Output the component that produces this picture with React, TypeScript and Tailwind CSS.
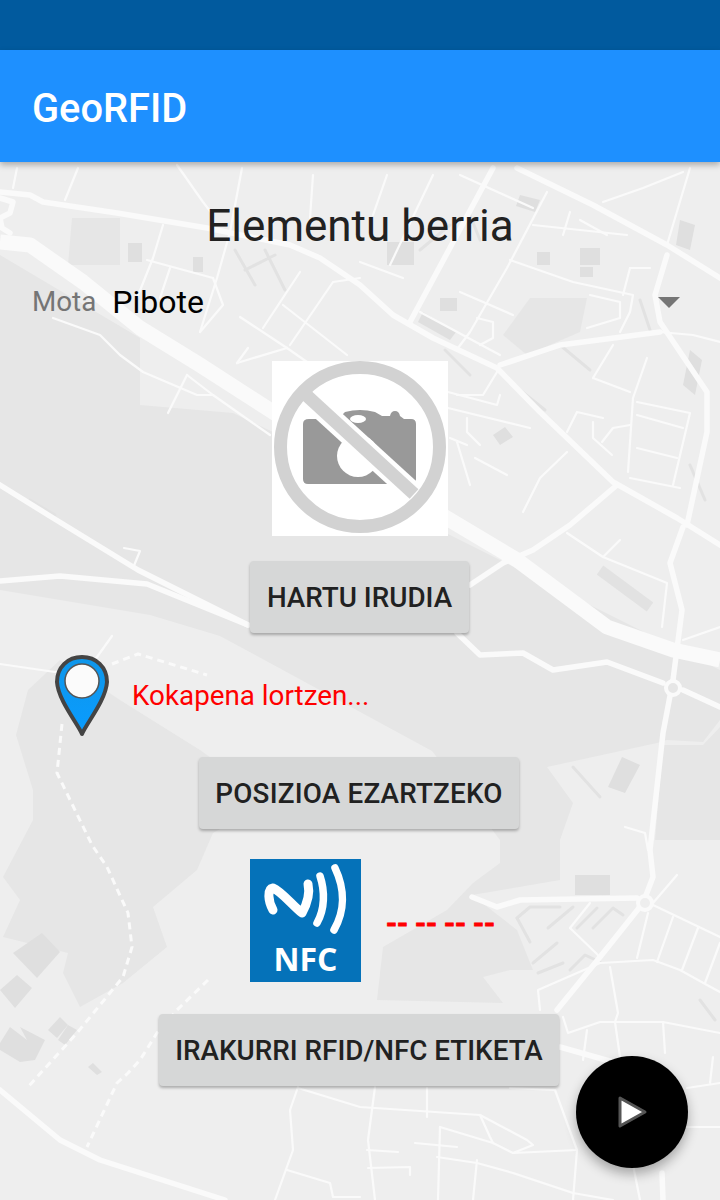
import React from "react";

const thick: string[] = [
  "0,242 30,245 83,282 140,328 200,365 273,412 360,465 450,520 517,560 607,627 673,650 720,660",
];
const medium: string[] = [
  "0,192 30,195 43,202 117,213 207,228 290,245 320,258 360,285 393,315 433,338 497,368 540,412 613,482 677,518 720,545",
  "493,168 410,322",
  "517,168 593,205 667,245 720,278",
  "667,255 655,295 660,322 707,392 707,432 687,525",
  "500,365 560,345 660,332",
  "470,585 503,563 533,550 570,525 617,485",
  "683,527 670,563 682,610 673,680 663,733 650,850 653,877 643,903 600,957 557,1010",
  "457,633 480,655 523,653 553,670 607,662 663,683",
  "683,690 720,707",
  "0,485 53,518 138,570 248,625",
  "0,581 60,576 147,584 248,625",
  "0,1090 60,1140 100,1160 225,1200",
  "472,897 497,907 520,900 637,898",
  "560,1047 613,1062",
  "662,1173 663,1200",
  "0,198 13,202 10,213 0,218 2,228 10,233",
];
const thin: string[] = [
  "17,168 13,188",
  "78,168 65,200",
  "242,168 230,232 217,278 200,332",
  "163,225 153,258 137,298",
  "147,260 213,278",
  "170,268 160,298",
  "213,278 223,305 200,332",
  "240,317 287,348 307,362",
  "237,363 287,348",
  "248,348 237,363",
  "283,305 347,355",
  "360,278 333,282 290,345",
  "300,272 263,328",
  "313,175 310,218",
  "177,165 203,202 213,215",
  "53,318 100,335 120,355 143,372 197,395 213,395 270,435",
  "187,375 168,413",
  "187,375 213,395",
  "547,192 507,268 470,332 458,348",
  "510,260 573,282 633,295 630,312 620,332",
  "533,225 627,235",
  "580,220 607,235",
  "570,212 563,235",
  "683,172 643,188 603,202",
  "690,168 667,245",
  "630,268 650,268",
  "630,268 623,295",
  "660,332 693,335 720,342",
  "433,175 390,265",
  "387,175 373,215",
  "460,175 533,208",
  "360,262 403,278",
  "420,312 500,355",
  "460,292 513,315",
  "477,318 493,322 493,338 480,345",
  "647,358 633,398 628,472",
  "637,402 690,413 673,485",
  "637,415 683,428",
  "637,448 677,458",
  "630,478 680,488",
  "593,378 630,392",
  "593,378 613,345",
  "577,412 603,418",
  "577,412 567,432",
  "593,422 593,438 612,455",
  "602,442 613,428 630,425",
  "448,408 530,428",
  "448,392 497,405 500,395",
  "497,372 483,395 457,395",
  "450,438 467,445",
  "457,442 470,485",
  "467,418 467,432 480,445",
  "475,458 507,475",
  "567,452 540,478 523,512",
  "590,295 620,302 620,318 587,328",
  "683,640 720,627",
  "567,533 603,557 667,583 662,627",
  "603,557 620,540",
  "625,827 645,833 648,850",
  "124,548 140,551 133,568",
  "112,636 92,664",
  "0,664 55,672 92,664",
  "298,1087 290,1110 293,1150 275,1200",
  "298,1088 360,1107 480,1115 527,1140 533,1145 513,1153 493,1143 440,1127",
  "287,1170 330,1183 333,1197 360,1197",
  "653,903 677,875",
  "653,905 720,937",
  "570,928 600,957",
  "570,928 590,903",
  "600,963 653,960 680,970 707,985 720,992",
  "600,963 538,990 540,1010",
  "673,917 657,962",
  "648,913 637,958",
  "698,928 682,970",
  "720,943 705,983",
  "610,967 618,1013 615,1022 620,1057",
  "563,1017 568,1033 600,1022 663,1022 720,1033",
  "587,1030 583,1060",
  "663,1022 665,1053",
  "510,1088 555,1090 577,1150 573,1200",
  "375,1087 368,1140 375,1200",
  "427,1088 427,1117",
  "440,1127 438,1200",
  "480,1115 490,1137 493,1143",
  "367,1150 398,1152",
  "415,1143 457,1147",
  "368,1168 410,1167 410,1175",
  "437,1157 477,1163 513,1173 573,1193 613,1200",
  "513,1153 577,1150",
  "477,1160 473,1200",
  "687,1088 720,1083",
  "713,1057 710,1083",
  "687,1127 720,1127",
  "620,1100 640,1200",
];
const dashed: string[] = [
  "112,664 138,654 207,675",
  "62,724 57,773 92,845 107,867 128,913 132,947 123,977 77,1033 28,1087",
  "208,980 177,1010 157,1033 140,1060 128,1073 117,1083 87,1147",
];
const darker: string[] = [
  "0,255 140,338 140,405 233,413 273,432 448,515 440,530 720,670 720,720 703,742 667,740 657,743 547,767 573,803 560,840 500,840 432,751 220,636 150,615 0,590",
  "663,745 703,745 720,727 720,840 655,840",
  "28,690 60,660 120,700 200,750 270,800 213,833 197,870 153,907 167,947 123,983 80,1007 63,973 68,953 3,937 20,900 3,877 33,820 33,790 16,735",
  "500,840 500,863 473,883 447,910 383,947 377,1000 503,1003 483,977 510,970 533,970 517,930 472,895 560,880 560,840",
  "72,218 120,218 120,265 68,265",
  "503,335 530,298 587,298 580,332 527,355",
];
const buildings: string[] = [
  "13,953 42,933 60,952 37,978",
  "0,990 17,975 32,988 15,1008",
  "0,1043 10,1027 27,1040 20,1027 45,1040 35,1060 20,1062 0,1050",
  "48,1030 60,1017 68,1025 57,1038",
  "58,1040 68,1025 77,1030 65,1045",
  "88,1067 93,1063 102,1072 97,1075",
  "622,757 640,765 625,793 608,787",
  "128,243 142,243 142,262 128,262",
  "193,257 203,257 203,272 193,272",
  "575,875 610,875 610,895 575,895",
  "580,267 593,267 593,277 580,277",
  "493,435 505,427 513,437 500,445",
  "537,252 550,252 550,265 537,265",
  "387,242 414,242 414,265 387,265",
  "423,312 456,332 450,340 418,322",
  "440,298 457,298 457,311 440,311",
  "580,248 600,248 600,265 580,265",
  "680,220 695,225 690,250 676,245",
  "690,350 702,360 695,395 683,385",
  "520,195 540,200 535,212 516,206",
];
const buildingLines: string[] = [
  "517,918 530,907 560,907",
  "517,918 530,942",
  "548,928 573,907",
  "577,928 597,908",
  "593,928 613,908 623,915",
  "533,963 557,943",
  "538,973 563,963",
  "570,970 585,955 600,962",
  "573,767 600,797",
  "235,250 255,285",
  "265,250 285,290",
  "245,270 275,255",
  "420,250 450,225",
  "470,215 480,240",
  "560,345 590,370",
  "445,350 470,375",
  "520,390 545,410",
  "640,300 650,330",
  "690,465 705,500",
  "700,1000 715,1020",
  "30,500 55,515",
];

function MapBackground() {
  return (
    <svg className="absolute inset-0 h-full w-full blur-[0.6px]" viewBox="0 0 720 1200" preserveAspectRatio="none">
      {darker.map((p) => (
        <polygon key={p} points={p} fill="#e6e6e6" />
      ))}
      {buildings.map((p) => (
        <polygon key={p} points={p} fill="#dfdfdf" />
      ))}
      <g fill="none" strokeLinecap="round" strokeLinejoin="round">
        <g stroke="#e2e2e2">
          {buildingLines.map((p) => (
            <polyline key={p} points={p} strokeWidth="3" />
          ))}
          <polyline points="600,570 650,607" strokeWidth="11" strokeLinecap="butt" />
        </g>
        <g stroke="#fafafa">
          {thin.map((p) => (
            <polyline key={p} points={p} strokeWidth="2.2" />
          ))}
          {medium.map((p) => (
            <polyline key={p} points={p} strokeWidth="5.5" />
          ))}
          {thick.map((p) => (
            <polyline key={p} points={p} strokeWidth="15" strokeLinecap="butt" />
          ))}
          {dashed.map((p) => (
            <polyline key={p} points={p} strokeWidth="3" strokeDasharray="7 5" strokeLinecap="butt" />
          ))}
        </g>
      </g>
      <circle cx="673" cy="688" r="7" fill="#e6e6e6" stroke="#fafafa" strokeWidth="4" />
      <circle cx="645" cy="903" r="7" fill="#eeeeee" stroke="#fafafa" strokeWidth="4" />
    </svg>
  );
}

function NoPhoto() {
  return (
    <svg viewBox="0 0 176 175" className="block h-[175px] w-[176px]">
      <rect width="176" height="175" fill="#ffffff" />
      <path
        d="M37 58 H66 L73 51 Q88 47 103 51 L110 55 H118 Q119 50 123 50 Q127 50 128 55 L132 58 H139 Q144 58 144 63 V118 Q144 123 139 123 H36 Q31 123 31 118 V63 Q31 58 37 58 Z"
        fill="#999999"
      />
      <ellipse cx="86" cy="58" rx="8" ry="4" fill="#ffffff" />
      <circle cx="86" cy="95" r="21" fill="#ffffff" />
      <line x1="36" y1="36" x2="140" y2="131" stroke="#ffffff" strokeWidth="22" />
      <circle cx="88" cy="86" r="79.5" fill="none" stroke="#d2d2d2" strokeWidth="13" />
      <line x1="32" y1="32" x2="142" y2="133" stroke="#d2d2d2" strokeWidth="13" />
    </svg>
  );
}

function Pin() {
  return (
    <svg viewBox="0 0 56 84" className="block h-[84px] w-[56px]">
      <defs>
        <linearGradient id="pinFill" x1="0" y1="0" x2="0" y2="1">
          <stop offset="0" stopColor="#0e96ea" />
          <stop offset="1" stopColor="#0a9cff" />
        </linearGradient>
      </defs>
      <path
        d="M28 80 C24 70 4 46 3 28 C3 13 14 3 28 3 C42 3 53 13 53 28 C52 46 32 70 28 80 Z"
        fill="url(#pinFill)"
        stroke="#444444"
        strokeWidth="4"
        strokeLinejoin="round"
      />
      <circle cx="28" cy="27" r="17" fill="#fbfbfb" stroke="#555555" strokeWidth="1.5" />
    </svg>
  );
}

function NfcTile() {
  return (
    <div className="flex h-[123px] w-[111px] flex-col items-center bg-[#0572b9]">
      <svg viewBox="0 0 111 80" className="block h-[80px] w-[111px] shrink-0">
        <g fill="none" stroke="#ffffff" strokeLinecap="round" strokeLinejoin="round">
          <path d="M23 51 C18 42 17 30 23 29 C31 32 43 47 52 54 C57 45 60 34 58 25" strokeWidth="9" />
          <path d="M70 17 C75 32 75 50 67 64" strokeWidth="7.5" />
          <path d="M85 9 C95 30 95 52 84 71" strokeWidth="7.5" />
        </g>
      </svg>
      <span className="mt-[2px] font-['Open_Sans',sans-serif] text-[32px] leading-[36px] font-bold text-white">NFC</span>
    </div>
  );
}

function ActionButton({ label, width }: { label: string; width: string }) {
  return (
    <button
      className={`flex h-[72px] ${width} items-center justify-center rounded-[4px] bg-[#d6d7d7] pt-[2px] font-['Roboto',sans-serif] text-[27.8px] font-medium whitespace-nowrap text-[#212121] shadow-[0_2px_3px_rgba(0,0,0,0.28)]`}
    >
      {label}
    </button>
  );
}

export default function App() {
  return (
    <div className="relative flex h-[1200px] w-[720px] flex-col overflow-hidden bg-[#eeeeee] font-['Roboto',sans-serif]">
      <MapBackground />
      <div className="relative h-[50px] shrink-0 bg-[#015a9e]" />
      <header className="relative flex h-[112px] shrink-0 items-center bg-[#1e90ff] pt-[6px] pl-[32px] shadow-[0_3px_6px_rgba(0,0,0,0.28)]">
        <h1 className="text-[39.8px] leading-none font-medium text-white">GeoRFID</h1>
      </header>

      <main className="relative flex flex-1 flex-col items-center">
        <h2 className="mt-[36px] h-[56px] text-[44px] leading-[56px] text-[#212121]">Elementu berria</h2>
        <div className="mt-[28px] flex h-[40px] w-full items-center pr-[40px] pl-[32px]">
          <span className="text-[27.8px] text-[#757575]">Mota</span>
          <span className="ml-[16px] text-[32px] text-black">Pibote</span>
          <div className="ml-auto h-0 w-0 border-x-[11px] border-t-[11px] border-x-transparent border-t-[#757575]" />
        </div>

        <div className="mt-[39px]">
          <NoPhoto />
        </div>
        <div className="mt-[25px] -ml-[1px]">
          <ActionButton label="HARTU IRUDIA" width="w-[219px]" />
        </div>

        <div className="mt-[21px] flex h-[84px] w-full items-center pl-[54px]">
          <Pin />
          <span className="ml-[22px] text-[27.8px] text-[#ff0000]">Kokapena lortzen...</span>
        </div>

        <div className="mt-[19px] -ml-[2px]">
          <ActionButton label="POSIZIOA EZARTZEKO" width="w-[320px] tracking-[0.2px]" />
        </div>

        <div className="mt-[30px] flex w-full items-center pl-[250px]">
          <NfcTile />
          <span className="ml-[25px] pt-[6px] text-[28px] leading-none font-bold text-[#ff0000] [-webkit-text-stroke:1px_#ff0000]">-- -- -- --</span>
        </div>

        <div className="mt-[32px] -ml-[2px]">
          <ActionButton label="IRAKURRI RFID/NFC ETIKETA" width="w-[400px]" />
        </div>
      </main>

      <button className="absolute top-[1056px] left-[576px] flex h-[112px] w-[112px] items-center justify-center rounded-full bg-black shadow-[0_6px_12px_rgba(0,0,0,0.3)]">
        <svg viewBox="0 0 32 36" className="h-[36px] w-[32px]">
          <path d="M4 4 L29 18 L4 32 Z" fill="#ffffff" stroke="#555555" strokeWidth="3" strokeLinejoin="round" />
        </svg>
      </button>
    </div>
  );
}
